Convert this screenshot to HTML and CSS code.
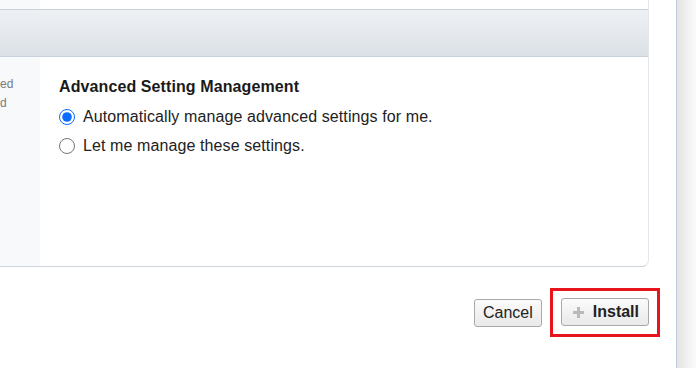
FILE: index.html
```html
<!DOCTYPE html>
<html lang="en">
<head>
    <meta charset="UTF-8" />
    <title>Install</title>
    <link rel="stylesheet" href="styles.css">
</head>
<body>
    <div class="page">
        <div class="panel">
            <div class="strip">
                <div class="side"></div>
                <div class="main"></div>
            </div>
            <div class="panel-header"></div>
            <div class="panel-body">
                <div class="side">
                    <p>ed</p>
                    <p>d</p>
                </div>
                <div class="main">
                    <h3>Advanced Setting Management</h3>
                    <label class="choice">
                        <input type="radio" name="mode" checked />
                        Automatically manage advanced settings for me.
                    </label>
                    <label class="choice">
                        <input type="radio" name="mode" />
                        Let me manage these settings.
                    </label>
                </div>
            </div>
        </div>

        <!-- Dialog buttons -->
        <div class="actions">
            <button class="btn">Cancel</button>
            <span class="highlight">
                <button class="btn btn-install">
                    <svg width="13" height="13" viewBox="0 0 13 13">
                        <path d="M6.5 1v11M1 6.5h11" stroke="#b9b9b9" stroke-width="3" />
                    </svg>
                    Install
                </button>
            </span>
        </div>
    </div>
    <div class="rail"></div>
</body>
</html>
```

FILE: styles.css
```css
* {
    box-sizing: border-box;
    margin: 0;
    padding: 0;
}

html, body {
    height: 100%;
}

body {
    display: flex;
    font-family: "Liberation Sans", Arial, sans-serif;
    color: #1f1f1f;
    background: #fff;
}

.page {
    width: 677px;
    border-right: 1px solid #bfcbd8;
}

.rail {
    flex: 1;
    background: linear-gradient(90deg, #e3e3e3, #f2f2f2 60%, #fbfbfb);
}

.panel {
    width: 649px;
    border-right: 1px solid #e3e8ee;
    border-bottom: 1px solid #cdd4dc;
    border-bottom-right-radius: 7px;
    overflow: hidden;
}

.strip {
    display: flex;
    height: 9px;
}

.side {
    width: 40px;
    background: #f8f9fb;
}

.main {
    flex: 1;
}

.panel-header {
    height: 48px;
    border-top: 1px solid #c9d1da;
    border-bottom: 1px solid #c9d1da;
    background: linear-gradient(180deg, #eef1f4, #dce1e7);
}

.panel-body {
    display: flex;
    height: 209px;
}

.panel-body .side {
    padding-top: 18px;
    font-size: 12px;
    color: #7a7a7a;
    line-height: 19px;
}

.panel-body .main {
    padding: 19px 0 0 19px;
}

h3 {
    font-size: 16px;
    font-weight: bold;
    color: #1a1a1a;
    line-height: 21px;
    letter-spacing: 0.1px;
    margin-bottom: 5px;
}

.choice {
    display: flex;
    align-items: center;
    gap: 8px;
    font-size: 16px;
    height: 29px;
    letter-spacing: 0.1px;
    color: #222;
}

.choice input {
    width: 16px;
    height: 16px;
    margin: 0;
    accent-color: #0a6cff;
}

.actions {
    display: flex;
    justify-content: flex-end;
    align-items: center;
    gap: 8px;
    padding: 21px 16px 0 0;
}

.highlight {
    display: flex;
    border: 3px solid #e8141b;
    padding: 7px 8px 8px 8px;
}

.btn {
    display: flex;
    align-items: center;
    gap: 8px;
    height: 28px;
    padding: 0 8px;
    font-family: "Liberation Sans", Arial, sans-serif;
    font-size: 16px;
    color: #222;
    background: linear-gradient(180deg, #fbfbfb, #e9e9e9);
    border: 1px solid #a9a9a9;
    border-radius: 3px;
}

.btn-install {
    font-weight: bold;
    padding: 0 9px 0 10px;
}
```
